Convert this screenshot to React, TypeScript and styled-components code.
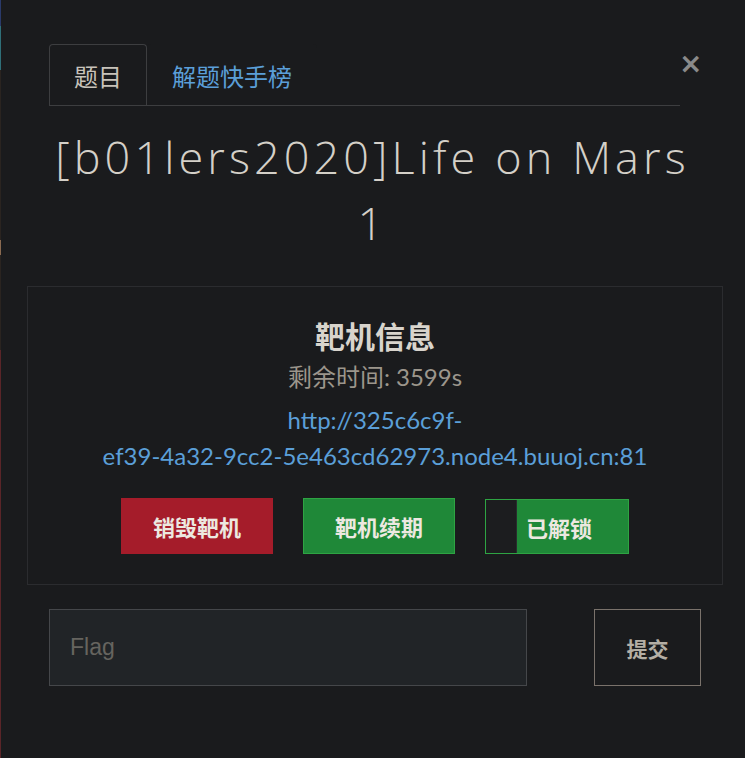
import React from "react";
import styled, { createGlobalStyle } from "styled-components";

const Global = createGlobalStyle`
  html, body { margin: 0; padding: 0; background: #1a1b1d; }
  body { font-family: "Lato", "Noto Sans CJK SC", sans-serif; color: #d8d4cc; }
  * { box-sizing: border-box; }
`;

const Page = styled.div`
  width: 745px;
  height: 758px;
  background: #1a1b1d;
  position: relative;
  overflow: hidden;
`;

const EdgeStripe = styled.div`
  position: absolute;
  left: 0;
  top: 0;
  width: 1px;
  height: 758px;
  background: linear-gradient(#2a3a6a 0 26px, #2f6f78 26px 70px, #2a2420 70px 240px, #8a6a50 240px 255px, #2a2420 255px 350px, #5a2528 350px 758px);
`;

const Header = styled.div`
  display: flex;
  align-items: flex-start;
  padding: 44px 0 0 49px;
`;

const Tabs = styled.div`
  display: flex;
  width: 631px;
  height: 62px;
  border-bottom: 1px solid #3d3e40;
`;

const Tab = styled.div<{ $active?: boolean }>`
  height: 61px;
  display: flex;
  align-items: center;
  justify-content: center;
  font-family: "Noto Sans CJK SC", sans-serif;
  font-size: 24px;
  color: ${(p) => (p.$active ? "#c8c3ba" : "#5b9fd8")};
  padding: 0 ${(p) => (p.$active ? "0" : "24px")};
  width: ${(p) => (p.$active ? "98px" : "auto")};
  border: 1px solid ${(p) => (p.$active ? "#3d3e40" : "transparent")};
  border-bottom: none;
  border-radius: 4px 4px 0 0;
  background: #1a1b1d;
`;

const Close = styled.div`
  margin: 6px 0 0 -1px;
  font-family: "DejaVu Sans", sans-serif;
  font-weight: bold;
  font-size: 28px;
  line-height: 28px;
  color: #8a8a8a;
  width: 20px;
`;

const Title = styled.h1`
  margin: 18px 0 0;
  text-align: center;
  font-family: "Open Sans", sans-serif;
  font-weight: 300;
  font-size: 45px;
  line-height: 66px;
  letter-spacing: 4.1px;
  color: #d4d0c8;
`;

const Card = styled.div`
  margin: 30px 22px 0 27px;
  height: 299px;
  border: 1px solid #2b2c2f;
  display: flex;
  flex-direction: column;
  align-items: center;
  padding-top: 28px;
`;

const CardHeading = styled.div`
  font-family: "Noto Sans CJK SC", sans-serif;
  font-weight: 700;
  font-size: 30px;
  line-height: 40px;
  color: #d8d4cc;
`;

const Remaining = styled.div`
  font-family: "Lato", "Noto Sans CJK SC", sans-serif;
  font-size: 24px;
  line-height: 36px;
  color: #9c968c;
  margin-top: 4px;
`;

const Link = styled.a`
  display: block;
  margin-top: 7px;
  padding: 0 20px;
  text-align: center;
  font-family: "Lato", sans-serif;
  font-size: 24px;
  line-height: 36px;
  color: #5b9fd8;
  text-decoration: none;
`;

const NoWrap = styled.span`
  white-space: nowrap;
`;

const Buttons = styled.div`
  display: flex;
  gap: 30px;
  margin-top: 24px;
`;

const Btn = styled.button<{ $color: "red" | "green" }>`
  width: 152px;
  height: 56px;
  border: 1px solid ${(p) => (p.$color === "red" ? "#a51c2a" : "#2ea443")};
  background: ${(p) => (p.$color === "red" ? "#a51c2a" : "#1f8838")};
  color: #ece8e0;
  font-family: "Noto Sans CJK SC", sans-serif;
  font-weight: 700;
  font-size: 22px;
  padding: 0;
  cursor: pointer;
`;

const UnlockBtn = styled.div`
  width: 144px;
  height: 55px;
  margin-top: 1px;
  border: 1px solid #2ea443;
  background: #1f8838;
  display: flex;
  align-items: stretch;
`;

const UnlockSlot = styled.div`
  width: 31px;
  background: #1c1d1f;
  border-right: 1px solid #2a2b2e;
`;

const UnlockLabel = styled.div`
  flex: 1;
  display: flex;
  align-items: center;
  padding-left: 9px;
  color: #ece8e0;
  font-family: "Noto Sans CJK SC", sans-serif;
  font-weight: 700;
  font-size: 22px;
`;

const FormRow = styled.div`
  display: flex;
  margin: 24px 0 0 49px;
  gap: 67px;
`;

const FlagInput = styled.input`
  width: 478px;
  height: 77px;
  background: #212427;
  border: 1px solid #45474a;
  padding: 0 20px;
  font-family: "Liberation Sans", sans-serif;
  font-size: 23px;
  color: #d8d4cc;
  outline: none;
  &::placeholder { color: #66645f; }
`;

const Submit = styled.button`
  width: 107px;
  height: 77px;
  background: transparent;
  border: 1px solid #7a726b;
  color: #b4aea4;
  font-family: "Noto Sans CJK SC", sans-serif;
  font-weight: 700;
  font-size: 21px;
  padding: 0;
`;

export default function App() {
  return (
    <Page>
      <Global />
      <EdgeStripe />
      <Header>
        <Tabs>
          <Tab $active>题目</Tab>
          <Tab>解题快手榜</Tab>
        </Tabs>
        <Close>×</Close>
      </Header>
      <Title>
        [b01lers2020]Life on Mars
        <br />1
      </Title>
      <Card>
        <CardHeading>靶机信息</CardHeading>
        <Remaining>剩余时间: 3599s</Remaining>
        <Link href="#">
          http://325c6c9f-<NoWrap>ef39-4a32-9cc2-5e463cd62973.node4.buuoj.cn:81</NoWrap>
        </Link>
        <Buttons>
          <Btn $color="red">销毁靶机</Btn>
          <Btn $color="green">靶机续期</Btn>
          <UnlockBtn>
            <UnlockSlot />
            <UnlockLabel>已解锁</UnlockLabel>
          </UnlockBtn>
        </Buttons>
      </Card>
      <FormRow>
        <FlagInput placeholder="Flag" />
        <Submit>提交</Submit>
      </FormRow>
    </Page>
  );
}
